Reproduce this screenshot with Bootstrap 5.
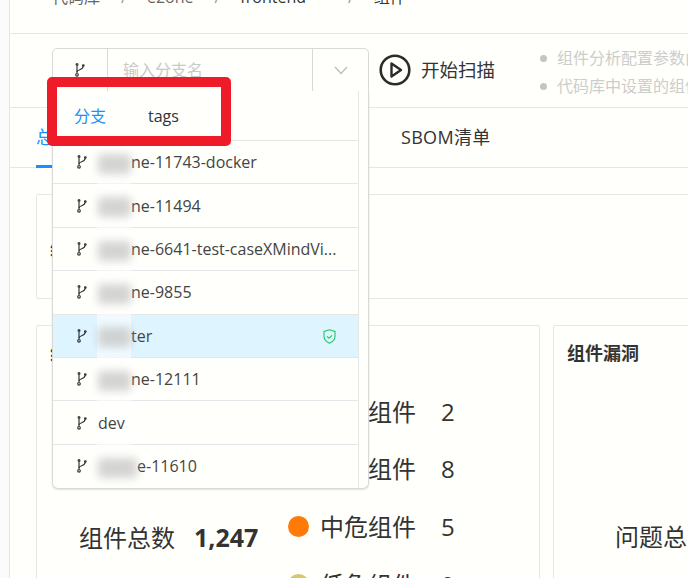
<!DOCTYPE html>
<html lang="zh">
<head>
<meta charset="utf-8">
<title>组件</title>
<link rel="stylesheet" href="https://cdn.jsdelivr.net/npm/bootstrap@5.3.0/dist/css/bootstrap.min.css">
<style>
html,body{width:688px;height:578px;overflow:hidden;margin:0;background:#fffffb}
body{font-family:"Open Sans","Noto Sans CJK SC",sans-serif;color:#333}
.shell{width:688px;height:578px;overflow:hidden}
.rail{width:10px;flex:none;background:#fbfbfb;border-right:1px solid #e6e6e4}
.work{width:678px;flex:none;position:relative}
.crumbs{height:34px;border-bottom:1px solid #e6e6e4;padding-left:42px;font-size:16px;line-height:24px;color:#666;display:flow-root}
.crumbs>div{margin-top:-15px}
.crumbs .sep{margin:0 20px 0 21px;color:#999}
.crumbs .cur{color:#333}
.tools{height:74px;border-bottom:1px solid #e6e6e4;padding:14px 0 0 42px;position:relative}
.picker{width:317px;height:44px;flex:none;position:relative}
.pickbox{height:44px;border:1px solid #d9d9d7;border-radius:5px 5px 0 0;background:#fffffb}
.pickicon{width:55px;border-right:1px solid #d9d9d7}
.pickinput{flex:1;padding-left:15px;font-size:16px;color:#c9c9c7}
.pickarrow{width:56px;border-left:1px solid #d9d9d7}
.drop{position:absolute;left:0;top:43px;width:317px;height:398px;background:#fffffb;border:1px solid #d9d9d7;border-top:0;border-radius:0 0 6px 6px;box-shadow:0 1px 2px rgba(0,0,0,.12);z-index:5;overflow:hidden}
.droplist{width:306px;border-right:1px solid #e6e6e4;height:100%}
.droptabs{height:50px;border-bottom:1px solid #e6e6e4;padding:13px 0 0 21px;font-size:16px;gap:42px}
.droptabs .on{color:#1890ff}
.branch{height:43.4px;border-bottom:1px solid #e6e6ea;padding-left:23px;font-size:16px;color:#444;background:transparent;border-radius:0;border-left:0;border-right:0;border-top:0}
.branch:last-child{border-bottom:0}
.branch.cur{background:#def4ff}
.branch svg.bi{margin-right:10px;flex:none}
.bname{white-space:nowrap;position:relative}
.veil{display:inline-block;width:33px;height:20px;vertical-align:middle;background:#bdbdbb;filter:blur(4px);opacity:.65;border-radius:3px}
.veil.wide{width:39px}
.strip{position:absolute;left:44px;top:50px;width:34px;height:338px;background:rgba(255,255,255,.55);z-index:1;pointer-events:none}
.droplist .branch>*{position:relative;z-index:2}
.shield{position:absolute!important;right:22px;top:14px}
.redbox{position:absolute;left:37px;top:43px;width:184px;height:69px;border:10px solid #ed1c28;border-radius:5px;z-index:6}
.scan{margin-left:10px;gap:10px;font-size:18.5px;color:#333;height:44px;flex:none;white-space:nowrap}
.notes{margin:-4px 0 0 45px;padding:0;list-style:none;font-size:16px;color:#cdcdcb;line-height:28px;white-space:nowrap;flex:none}
.notes li{display:flex;align-items:center}
.notes li::before{content:"";width:7px;height:7px;border-radius:50%;background:#c4c4c2;margin-right:10px;flex:none}
.tabbar{height:60px;border-bottom:1px solid #e6e6e4;padding-left:26px;position:relative;font-size:18px}
.tabbar .act{color:#1890ff;position:absolute;left:26px;top:17px;line-height:24px}
.tabbar .bar{position:absolute;left:26px;bottom:-1px;width:40px;height:3px;background:#1890ff}
.tabbar .sbom{position:absolute;left:391px;top:17px;line-height:24px;color:#333;letter-spacing:.3px}
.panel{border:1px solid #e6e6e4;border-radius:2px;background:transparent}
.info{margin:26px 0 0 26px;width:700px;height:105px;padding:42px 0 0 13px;font-size:16px;line-height:24px;font-weight:700;white-space:nowrap}
.duo{margin:26px 0 0 26px;gap:13px;width:800px}
.pleft{width:504px;height:300px;position:relative;flex:none}
.pright{width:300px;height:300px;position:relative;flex:none}
.ptitle{position:absolute;left:13px;top:14px;font-size:18px;line-height:26px;font-weight:700;color:#333}
.total{position:absolute;left:42px;top:193px;font-size:24px;line-height:36px;color:#333;white-space:nowrap}
.total b{margin-left:19px;font-weight:700;font-size:25px}
.legend{position:absolute;left:251px;top:57px;margin:0;padding:0;list-style:none;font-size:24px;line-height:36px}
.legend li{height:57.6px;display:flex;align-items:center;white-space:nowrap}
.legend .dot{width:21px;height:21px;border-radius:50%;margin-right:11px;flex:none}
.legend .lbl{width:121px}
</style>
</head>
<body>
<div class="shell d-flex">
  <div class="rail"></div>
  <div class="work">
    <div class="crumbs"><div class="d-flex"><span>代码库</span><span class="sep">/</span><span>e2one</span><span class="sep">/</span><span class="cur">frontend</span><span class="sep" style="margin-left:42px">/</span><span class="cur">组件</span></div></div>
    <div class="tools d-flex align-items-start">
      <div class="picker">
        <div class="pickbox d-flex">
          <div class="pickicon d-flex align-items-center justify-content-center"><svg class="bi" width="12" height="14" viewBox="0 0 12 14" fill="none" stroke="#333" stroke-width="1.2"><circle cx="3" cy="1.5" r=".9"/><path d="M3 3v7"/><circle cx="3" cy="11.8" r="1.3"/><path d="M3 9c0-3 6-1.500 6-5.500"/><circle cx="9.300" cy="2.600" r=".8"/></svg></div>
          <div class="pickinput d-flex align-items-center">输入分支名</div>
          <div class="pickarrow d-flex align-items-center justify-content-center"><svg width="14" height="9" viewBox="0 0 14 9" fill="none" stroke="#bdbdbb" stroke-width="1.300"><path d="M1 1l6 6.500L13 1"/></svg></div>
        </div>
        <div class="drop">
          <div class="droplist">
            <div class="droptabs d-flex"><span class="on">分支</span><span>tags</span></div>
            <div class="strip"></div>
            <div class="list-group list-group-flush" id="blist"></div>
          </div>
        </div>
      </div>
      <div class="scan d-flex align-items-center">
        <svg width="32" height="32" viewBox="0 0 32 32" fill="none" stroke="#2b2b2b"><circle cx="16" cy="16" r="14.300" stroke-width="2.600"/><path d="M12.500 9.500l9.500 6.500-9.500 6.500z" stroke-width="2.400" stroke-linejoin="round"/></svg>
        <span>开始扫描</span>
      </div>
      <ul class="notes"><li>组件分析配置参数由系统默认设置</li><li>代码库中设置的组件分析配置优先</li></ul>
      <div class="redbox"></div>
    </div>
    <div class="tabbar"><span class="act">总览</span><span class="bar"></span><span class="sbom">SBOM清单</span></div>
    <div class="panel info">组件概览信息</div>
    <div class="duo d-flex">
      <div class="panel pleft">
        <div class="ptitle">组件风险</div>
        <div class="total">组件总数<b>1,247</b></div>
        <ul class="legend">
          <li><span class="dot" style="background:#e0312b"></span><span class="lbl">严重组件</span><span>2</span></li>
          <li><span class="dot" style="background:#f5483b"></span><span class="lbl">高危组件</span><span>8</span></li>
          <li><span class="dot" style="background:#ff7a06"></span><span class="lbl">中危组件</span><span>5</span></li>
          <li><span class="dot" style="background:#d4c673"></span><span class="lbl">低危组件</span><span>9</span></li>
        </ul>
      </div>
      <div class="panel pright">
        <div class="ptitle">组件漏洞</div>
        <div class="total" style="left:61px">问题总数</div>
      </div>
    </div>
  </div>
</div>
<script src="https://cdn.jsdelivr.net/npm/bootstrap@5.3.0/dist/js/bootstrap.bundle.min.js"></script>
<script>
var icon='<svg class="bi" width="12" height="14" viewBox="0 0 12 14" fill="none" stroke="#333" stroke-width="1.2"><circle cx="3" cy="1.5" r=".9"/><path d="M3 3v7"/><circle cx="3" cy="11.8" r="1.3"/><path d="M3 9c0-3 6-1.500 6-5.500"/><circle cx="9.300" cy="2.600" r=".8"/></svg>';
var shield='<svg class="shield" width="13" height="15" viewBox="0 0 13 15" fill="none" stroke="#1fc95f" stroke-width="1.100"><path d="M6.500 .8l5.500 1.700v5c0 3.200-2.500 5.300-5.500 6.700C3.500 12.800 1 10.700 1 7.500v-5z"/><path d="M4 7.300l2 1.900 3-2.900"/></svg>';
var rows=[['v','ne-11743-docker'],['v','ne-11494'],['v','ne-6641-test-caseXMindVi...'],['v','ne-9855'],['v','ter',1],['v','ne-12111'],['','dev'],['w','e-11610']];
document.getElementById('blist').innerHTML=rows.map(function(r){
  var veil=r[0]?'<span class="veil'+(r[0]=='w'?' wide':'')+'"></span>':'';
  return '<div class="list-group-item branch d-flex align-items-center'+(r[2]?' cur':'')+'">'+icon+'<span class="bname">'+veil+r[1]+'</span>'+(r[2]?shield:'')+'</div>';
}).join('');
</script>
</body>
</html>
